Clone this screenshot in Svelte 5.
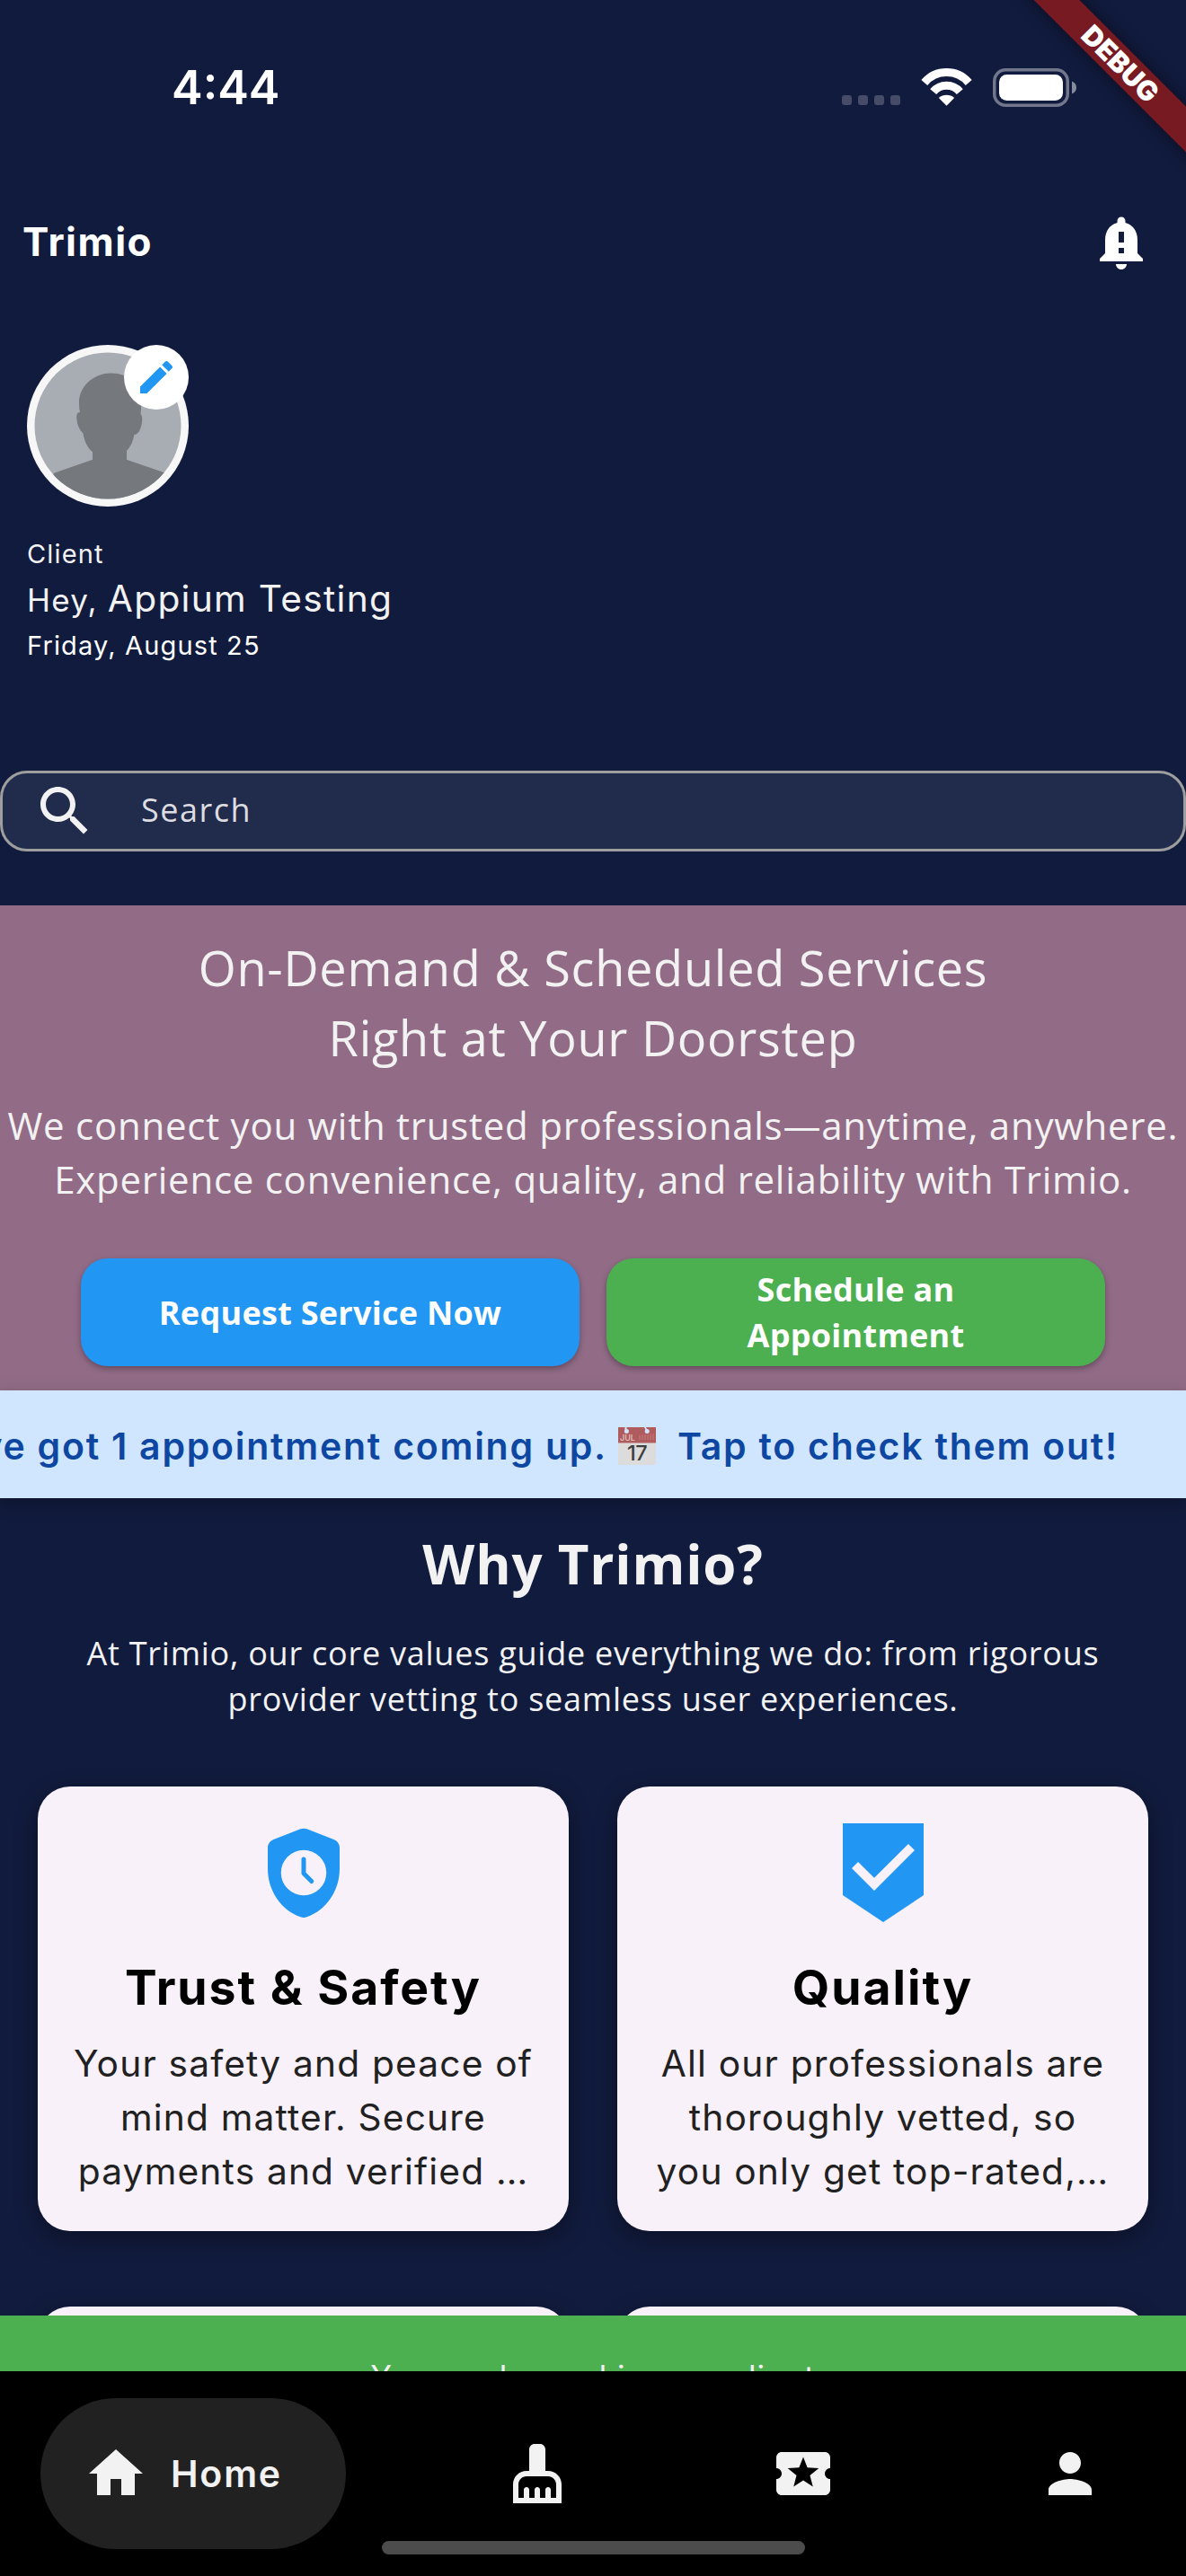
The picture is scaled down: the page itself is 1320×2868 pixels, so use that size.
<script>
  const cards = [
    {
      icon: 'safety',
      title: 'Trust & Safety',
      lines: ['Your safety and peace of', 'mind matter. Secure', 'payments and verified …'],
    },
    {
      icon: 'quality',
      title: 'Quality',
      lines: ['All our professionals are', 'thoroughly vetted, so', 'you only get top-rated,…'],
    },
    { icon: '', title: '', lines: [] },
    { icon: '', title: '', lines: [] },
  ];

  const tabs = [
    {
      name: 'Services',
      path: 'M16 11h-1V3c0-1.1-.9-2-2-2h-2c-1.1 0-2 .9-2 2v8H8c-2.76 0-5 2.24-5 5v7h18v-7c0-2.76-2.24-5-5-5zm3 10h-2v-3c0-.55-.45-1-1-1s-1 .45-1 1v3h-2v-3c0-.55-.45-1-1-1s-1 .45-1 1v3H9v-3c0-.55-.45-1-1-1s-1 .45-1 1v3H5v-5c0-1.65 1.35-3 3-3h8c1.65 0 3 1.35 3 3v5z',
    },
    {
      name: 'Offers',
      path: 'M20 12c0-1.1.9-2 2-2V6c0-1.1-.9-2-2-2H4c-1.1 0-1.99.9-1.99 2v4c1.1 0 1.99.9 1.99 2s-.89 2-2 2v4c0 1.1.9 2 2 2h16c1.1 0 2-.9 2-2v-4c-1.1 0-2-.9-2-2zm-4.42 4.8L12 14.5l-3.58 2.3 1.08-4.12-3.29-2.69 4.24-.25L12 5.8l1.54 3.95 4.24.25-3.29 2.69 1.09 4.11z',
    },
    {
      name: 'Account',
      path: 'M12 12c2.21 0 4-1.79 4-4s-1.79-4-4-4-4 1.79-4 4 1.79 4 4 4zm0 2c-2.67 0-8 1.34-8 4v2h16v-2c0-2.66-5.33-4-8-4z',
    },
  ];
</script>

<div class="screen">
  <div class="scroll">
    <header class="status">
      <span class="time">4:44</span>
      <div class="indicators">
        <div class="signal"><i></i><i></i><i></i><i></i></div>
        <svg class="wifi" viewBox="0 0 57 42">
          <path d="M3.8 16A32.3 32.3 0 0 1 53.2 16" />
          <path d="M13.7 26.1A19.3 19.3 0 0 1 43.3 26.1" />
          <path class="solid" d="M19.8 33A13.2 13.2 0 0 1 37.2 33L28.5 41.8Z" />
        </svg>
        <svg class="battery" viewBox="0 0 93 43">
          <rect class="shell" x="1.75" y="1.75" width="81.5" height="39.5" rx="12.5" />
          <rect class="charge" x="7" y="7" width="71" height="29" rx="8.5" />
          <path class="cap" d="M88 14.5Q93 16.5 93 21.5T88 28.5Z" />
        </svg>
      </div>
    </header>

    <div class="appbar">
      <span class="brand">Trimio</span>
      <svg class="bell" viewBox="0 0 24 24">
        <path d="M18 16v-5c0-3.07-1.64-5.64-4.5-6.32V4c0-.83-.67-1.5-1.5-1.5s-1.5.67-1.5 1.5v.68C7.63 5.36 6 7.92 6 11v5l-2 2v1h16v-1l-2-2zm-5 0h-2v-2h2v2zm0-4h-2V8h2v4zm-1 10c1.1 0 2-.9 2-2h-4c0 1.1.89 2 2 2z" />
      </svg>
    </div>

    <section class="profile">
      <div class="avatar">
        <svg class="photo" viewBox="0 0 180 180">
          <defs>
            <clipPath id="face"><circle cx="90" cy="90" r="81.5" /></clipPath>
          </defs>
          <circle cx="90" cy="90" r="90" fill="#f7f7f7" />
          <circle cx="90" cy="90" r="81.5" fill="#a8adb4" />
          <path
            clip-path="url(#face)"
            fill="#75787c"
            d="M93 31.5C72 32 57.5 48 58 65Q58 71 59 75Q55 75 55.2 81Q56 93 62.5 98.5C64 108 67 113.500 73 119.3V127.700L30 142.700L10 180H170L153 142.200L111 127.700V118Q118 110 119.300 100Q124 100 126.700 92Q130 80 126.500 77L127.300 67C127 44 112 31 93 31.500Z"
          />
        </svg>
        <span class="edit">
          <svg viewBox="0 0 24 24">
            <path d="M3 17.250V21h3.750L17.810 9.940l-3.750-3.750L3 17.250zM20.710 7.040c.39-.39.39-1.020 0-1.410l-2.340-2.340c-.39-.39-1.020-.39-1.410 0l-1.830 1.830 3.750 3.750 1.830-1.830z" />
          </svg>
        </span>
      </div>
      <div class="role">Client</div>
      <div class="greeting"><span class="hey">Hey,&nbsp;</span><span class="name">Appium Testing</span></div>
      <div class="date">Friday, August 25</div>
    </section>

    <div class="search">
      <svg viewBox="0 0 24 24">
        <path d="M15.500 14h-.79l-.28-.27C15.410 12.590 16 11.110 16 9.500 16 5.910 13.090 3 9.500 3S3 5.910 3 9.500 5.910 16 9.500 16c1.610 0 3.090-.59 4.230-1.570l.27.28v.79l5 4.990L20.490 19l-4.990-5zm-6 0C7.010 14 5 11.990 5 9.500S7.010 5 9.500 5 14 7.010 14 9.500 11.990 14 9.500 14z" />
      </svg>
      <span>Search</span>
    </div>

    <section class="hero">
      <h1>On-Demand &amp; Scheduled Services<br />Right at Your Doorstep</h1>
      <p>
        We connect you with trusted professionals—anytime, anywhere.<br />Experience convenience, quality, and
        reliability with Trimio.
      </p>
      <div class="actions">
        <button class="now">Request Service Now</button>
        <button class="later">Schedule an<br />Appointment</button>
      </div>
    </section>

    <div class="ticker">
      <span>You've got 1 appointment coming up.</span>
      <svg class="calendar" viewBox="0 0 42 42">
        <rect width="42" height="42" rx="1" fill="#dcdcdd" />
        <path d="M0 0H42V17.400H0Z" fill="#b05b5d" />
        <path d="M7.500 0H9.500V4H7.500ZM29 0H31L33 4H31Z" fill="#d0e6ff" />
        <circle cx="9.400" cy="4.500" r="2.500" fill="#d0e6ff" />
        <circle cx="32.200" cy="4.500" r="2.500" fill="#d0e6ff" />
        <path d="M24 9V14M27 8.500V14M30 8V14M33 8V14M36 7.500V14M39 7V14" stroke="#c27c7e" stroke-width="1" />
        <text class="month" x="2" y="14.500">JUL</text>
        <text class="day" x="21" y="37">17</text>
      </svg>
      <span>Tap to check them out!</span>
    </div>

    <section class="why">
      <h2>Why Trimio?</h2>
      <p>
        At Trimio, our core values guide everything we do: from rigorous<br />provider vetting to seamless user
        experiences.
      </p>
      <div class="cards">
        {#each cards as card}
          <article class="card">
            {#if card.icon === 'safety'}
              <svg viewBox="0 0 24 24">
                <path d="M11.300 2.270L5.300 4.600C4.500 4.900 4 5.600 4 6.500V11.100C4 16 7 20.400 11.300 21.850Q12 22.150 12.700 21.850C17 20.400 20 16 20 11.100V6.500C20 5.600 19.500 4.900 18.700 4.600L12.700 2.270Q12 2 11.300 2.270Z" />
                <circle class="dial" cx="12" cy="12" r="5.050" />
                <path class="hands" d="M12 9V12.150L13.750 13.900" />
              </svg>
            {:else if card.icon === 'quality'}
              <svg viewBox="0 0 24 24">
                <path d="M3 1V17L12 23L21 17V1ZM10 16L5 11L6.410 9.590L10 13.170L17.590 5.580L19 7Z" />
              </svg>
            {/if}
            <h3>{card.title}</h3>
            <p>{#each card.lines as line}<span>{line}</span>{/each}</p>
          </article>
        {/each}
      </div>
    </section>
  </div>

  <div class="notice">You are logged in as a client</div>

  <nav>
    <div class="tab active">
      <svg viewBox="0 0 24 24"><path d="M10 20v-6h4v6h5v-8h3L12 3 2 12h3v8z" /></svg>
      <span>Home</span>
    </div>
    {#each tabs as tab}
      <div class="tab" aria-label={tab.name} role="img">
        <svg viewBox="0 0 24 24"><path d={tab.path} /></svg>
      </div>
    {/each}
    <span class="home-indicator"></span>
  </nav>

  <div class="ribbon-corner"><span class="ribbon">DEBUG</span></div>
</div>

<style>
  :global(body) {
    background: #111b3d;
  }
  .screen {
    position: relative;
    width: 1320px;
    height: 2868px;
    overflow: hidden;
    display: flex;
    flex-direction: column;
    background: #111b3d;
    color: #f2f2f2;
    font-family: Inter, 'Liberation Sans', sans-serif;
  }
  .screen * {
    box-sizing: border-box;
  }
  svg {
    display: block;
    flex: none;
  }
  h1,
  h2,
  h3,
  p {
    margin: 0;
    font-weight: 400;
  }
  .scroll {
    flex: none;
    height: 2578px;
    overflow: hidden;
  }

  .status {
    display: flex;
    align-items: center;
    justify-content: space-between;
    height: 194px;
    padding: 0 122px 0 191px;
    color: #fff;
  }
  .time {
    padding-top: 2px;
    font-size: 52px;
    font-weight: 600;
    line-height: 60px;
  }
  .indicators {
    display: flex;
    align-items: center;
    gap: 23px;
  }
  .signal {
    display: flex;
    gap: 7px;
    padding-top: 29px;
  }
  .signal i {
    width: 11px;
    height: 11px;
    border-radius: 3px;
    background: #464c68;
  }
  .wifi {
    width: 57px;
    height: 42px;
    fill: none;
    stroke: #fff;
    stroke-width: 9;
  }
  .wifi .solid {
    fill: #fff;
    stroke: none;
  }
  .battery {
    width: 93px;
    height: 43px;
    fill: #fff;
  }
  .shell {
    fill: none;
    stroke: #72778c;
    stroke-width: 3.5;
  }
  .cap {
    fill: #868b9d;
  }

  .appbar {
    display: flex;
    align-items: center;
    justify-content: space-between;
    height: 152px;
    padding: 0 36px 0 25px;
    color: #fff;
  }
  .brand {
    padding-bottom: 2px;
    font-size: 44px;
    font-weight: 650;
    letter-spacing: 1.5px;
    line-height: 60px;
  }
  .bell {
    width: 72px;
    height: 72px;
    fill: #fff;
  }

  .profile {
    padding: 38px 30px 0;
  }
  .avatar {
    position: relative;
    width: 180px;
    height: 180px;
    margin-bottom: 30px;
  }
  .edit {
    position: absolute;
    top: 0;
    right: 0;
    display: grid;
    place-items: center;
    width: 72px;
    height: 72px;
    border-radius: 50%;
    background: #fff;
  }
  .edit svg {
    width: 48px;
    height: 48px;
    fill: #2196f3;
  }
  .role,
  .date {
    font-size: 29px;
    letter-spacing: 1.15px;
    white-space: nowrap;
  }
  .role {
    height: 44px;
    line-height: 46px;
  }
  .date {
    line-height: 49px;
    color: #fff;
  }
  .greeting {
    display: flex;
    align-items: baseline;
    height: 56px;
    line-height: 57px;
  }
  .hey {
    font-size: 35px;
    letter-spacing: 1.2px;
  }
  .name {
    font-size: 40.7px;
    letter-spacing: 1.3px;
  }

  .search {
    display: flex;
    align-items: center;
    gap: 49px;
    height: 90px;
    margin: 115px 0 60px;
    padding-left: 33px;
    border: 3px solid #9e9e9e;
    border-radius: 30px;
    background: #212b4b;
    font-family: 'Open Sans', sans-serif;
    font-size: 36px;
    letter-spacing: 1.5px;
  }
  .search svg {
    width: 72px;
    height: 72px;
    fill: #f2f2f2;
  }
  .search span {
    padding-bottom: 3px;
    line-height: 50px;
    color: #dcdde1;
  }

  .hero {
    height: 540px;
    padding-top: 30px;
    background: #926c87;
    font-family: 'Open Sans', sans-serif;
    text-align: center;
    white-space: nowrap;
  }
  .hero h1 {
    font-size: 54px;
    line-height: 78px;
    letter-spacing: 0.75px;
  }
  .hero p {
    margin-top: 29px;
    font-size: 42px;
    line-height: 60px;
    letter-spacing: 0.75px;
  }
  .actions {
    display: grid;
    grid-template-columns: 1fr 1fr;
    gap: 30px;
    margin-top: 58px;
    padding: 0 90px;
  }
  button {
    height: 120px;
    padding: 0;
    border: 0;
    border-radius: 30px;
    box-shadow: 0 3px 7px rgba(0, 0, 0, 0.32);
    color: #fff;
    font: 700 36px/51px 'Open Sans', sans-serif;
    letter-spacing: 0.28px;
  }
  .now {
    padding-top: 1px;
    background: #2196f3;
  }
  .later {
    background: #4caf50;
  }

  .ticker {
    position: relative;
    display: flex;
    align-items: center;
    justify-content: flex-end;
    height: 120px;
    padding: 4px 75px 0 0;
    background: #d0e6ff;
    box-shadow: 0 6px 18px rgba(0, 0, 0, 0.26);
    color: #0d47a1;
    font-size: 41px;
    font-weight: 560;
    letter-spacing: 1.75px;
    white-space: nowrap;
  }
  .calendar {
    width: 42px;
    height: 42px;
    margin: 0 24px 0 12px;
  }
  .month {
    fill: #e3c9ca;
    font: 500 9px Inter, sans-serif;
    letter-spacing: 0;
  }
  .day {
    fill: #3f3f40;
    font: 500 23.5px Inter, sans-serif;
    letter-spacing: -0.5px;
    text-anchor: middle;
  }

  .why {
    padding-top: 32px;
    text-align: center;
  }
  .why h2 {
    font: 700 60px/82px 'Open Sans', sans-serif;
    letter-spacing: 0.8px;
  }
  .why > p {
    margin-top: 33px;
    font: 400 36px/51.4px 'Open Sans', sans-serif;
    letter-spacing: 0.76px;
    white-space: nowrap;
  }
  .cards {
    display: grid;
    grid-template-columns: 1fr 1fr;
    gap: 84px 54px;
    margin-top: 71px;
    padding: 0 42px;
  }
  .card {
    display: flex;
    flex-direction: column;
    align-items: center;
    height: 495px;
    padding-top: 36px;
    border-radius: 36px;
    background: #f8f1f9;
    box-shadow: 0 8px 26px rgba(0, 0, 0, 0.36);
  }
  .card svg {
    width: 120px;
    height: 120px;
    fill: #2196f3;
  }
  .card .dial {
    fill: #f8f1f9;
  }
  .card .hands {
    fill: none;
    stroke: #2196f3;
    stroke-linecap: round;
    stroke-linejoin: round;
  }
  .card h3 {
    margin-top: 29px;
    color: #000;
    font-size: 53.5px;
    font-weight: 680;
    line-height: 78px;
    letter-spacing: 1.95px;
  }
  .card p {
    margin-top: 16px;
    color: #212121;
    font-size: 40.7px;
    line-height: 60px;
    letter-spacing: 1.17px;
    white-space: nowrap;
  }
  .card p span {
    display: block;
  }

  .notice {
    flex: none;
    height: 62px;
    padding-top: 43px;
    overflow: hidden;
    background: #4caf50;
    font-size: 35px;
    line-height: 50px;
    letter-spacing: 1.05px;
    text-align: center;
  }

  nav {
    position: relative;
    display: flex;
    flex: none;
    justify-content: space-between;
    height: 228px;
    padding: 30px 45px;
    background: #000;
  }
  .tab {
    display: flex;
    align-items: center;
    justify-content: center;
    width: 168px;
    height: 168px;
    border-radius: 84px;
  }
  .tab svg {
    width: 72px;
    height: 72px;
    fill: #f2f2f2;
  }
  .active {
    justify-content: flex-start;
    gap: 25px;
    width: 340px;
    padding-left: 48px;
    background: #212121;
    font-size: 41px;
    font-weight: 560;
    letter-spacing: 1.8px;
  }
  .home-indicator {
    position: absolute;
    left: 425px;
    bottom: 24px;
    width: 471px;
    height: 15px;
    border-radius: 8px;
    background: #4c4c4c;
  }

  .ribbon-corner {
    position: absolute;
    top: 0;
    right: 0;
    width: 250px;
    height: 250px;
    overflow: hidden;
  }
  .ribbon {
    position: absolute;
    top: 53px;
    left: -23px;
    width: 400px;
    height: 36px;
    transform: rotate(45deg);
    background: #771a22;
    box-shadow: 0 0 18px rgba(0, 0, 0, 0.5);
    color: #fff;
    font-size: 30.6px;
    font-weight: 900;
    line-height: 36px;
    text-align: center;
  }
</style>
